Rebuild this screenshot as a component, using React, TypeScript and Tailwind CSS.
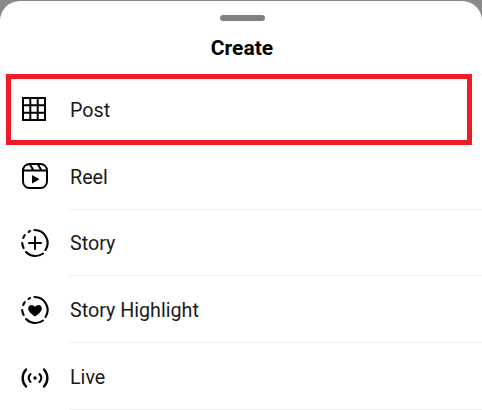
import React from "react";

const s = { fill: "none", stroke: "#000", strokeWidth: 2, strokeLinecap: "round" as const, strokeLinejoin: "round" as const };

function GridIcon() {
  return (
    <svg width="26" height="26" viewBox="0 0 26 26">
      <g fill="none" stroke="#000" strokeWidth="2">
        <rect x="2" y="2" width="22" height="22" />
        <path d="M9.300 2v22M16.700 2v22M2 9.300h22M2 16.700h22" />
      </g>
    </svg>
  );
}

function ReelIcon() {
  return (
    <svg width="28" height="28" viewBox="0 0 28 28">
      <g {...s}>
        <rect x="2" y="2" width="24" height="24" rx="6.500" />
        <path d="M2.500 8.500h23M9 2.500l3.500 6M17 2.500l3.500 6" />
      </g>
      <path d="M11 13l7.500 4.300L11 21.500z" fill="#000" />
    </svg>
  );
}

function DashedCircle({ children }: { children: React.ReactNode }) {
  return (
    <svg width="30" height="30" viewBox="0 0 30 30">
      <g {...s} strokeWidth={2.1}>
        <path d="M14.500 2a13 13 0 0 1 11 20" />
        <path d="M23 25.500a13 13 0 0 1-17 -1.500" />
        <path d="M3.600 20a13 13 0 0 1-1.400-5" />
        <path d="M3.200 10a13 13 0 0 1 1.600-2.800" />
        <path d="M8.500 4a13 13 0 0 1 1.600-1" />
      </g>
      {children}
    </svg>
  );
}

function PlusIcon() {
  return (
    <DashedCircle>
      <path d="M15 9v12M9 15h12" {...s} />
    </DashedCircle>
  );
}

function HeartIcon() {
  return (
    <DashedCircle>
      <path d="M15 21.500c-4-3-6.800-5-6.800-8 0-2 1.500-3.500 3.400-3.500 1.400 0 2.600.7 3.400 2 .8-1.300 2-2 3.400-2 1.900 0 3.400 1.500 3.400 3.500 0 3-2.800 5-6.800 8z" fill="#000" />
    </DashedCircle>
  );
}

function LiveIcon() {
  return (
    <svg width="30" height="24" viewBox="0 0 30 24">
      <g {...s} strokeWidth={2.4}>
        <path d="M6 3.500c-4.500 4.800-4.500 12.200 0 17" />
        <path d="M24 3.500c4.500 4.800 4.500 12.200 0 17" />
        <path d="M10.500 8c-2.300 2.500-2.300 5.500 0 8" strokeWidth={2} />
        <path d="M19.500 8c2.300 2.500 2.300 5.500 0 8" strokeWidth={2} />
      </g>
      <circle cx="15" cy="12" r="1.700" fill="#000" />
    </svg>
  );
}

function Row({ icon, label, rowClass, iconClass, textClass }: { icon: React.ReactNode; label: string; rowClass: string; iconClass: string; textClass: string }) {
  return (
    <div className={`flex items-stretch ${rowClass}`}>
      <div className={`flex w-[69px] shrink-0 items-center justify-center ${iconClass}`}>{icon}</div>
      <div className={`flex flex-1 items-center border-b border-[#efefef] pl-[1px] text-[19.7px] text-[#1a1a1a] ${textClass}`}>{label}</div>
    </div>
  );
}

export default function App() {
  return (
    <div className="h-[410px] w-[482px] overflow-hidden bg-[#8a8a8a] pt-[1px] font-['Roboto',sans-serif]">
      <div className="h-[409px] rounded-t-[20px] bg-white">
        <div className="flex justify-center pl-[2px] pt-[14px]">
          <div className="h-[6px] w-[45px] rounded-full bg-[#808080]" />
        </div>
        <div className="flex h-[54px] items-center justify-center border-b border-[#efefef] pl-[2px] pt-[3px] text-[21px] font-bold text-black">Create</div>
        <div className="-mt-[1px] ml-[6px] flex h-[71px] w-[466px] items-center border-[5px] border-[#ef1c25]">
          <div className="flex w-[59px] shrink-0 items-center pb-[2px] pl-[10px]">
            <GridIcon />
          </div>
          <span className="pt-[2px] text-[19.7px] text-[#1a1a1a]">Post</span>
        </div>
        <Row icon={<ReelIcon />} label="Reel" rowClass="h-[65px]" iconClass="pb-[4px]" textClass="pt-[1px]" />
        <Row icon={<PlusIcon />} label="Story" rowClass="h-[66px]" iconClass="" textClass="pt-[3px]" />
        <Row icon={<HeartIcon />} label="Story Highlight" rowClass="h-[67px]" iconClass="" textClass="pt-[4px]" />
        <Row icon={<LiveIcon />} label="Live" rowClass="h-[67px] pt-[2px]" iconClass="" textClass="pt-[1px]" />
      </div>
    </div>
  );
}
